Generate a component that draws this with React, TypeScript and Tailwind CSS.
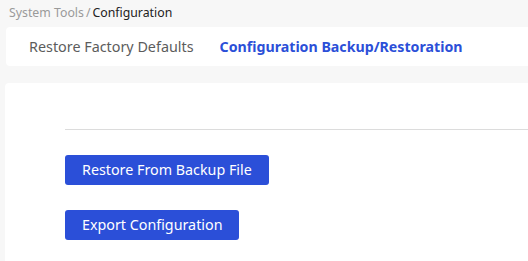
export default function App() {
  return (
    <div className="w-[528px] h-[261px] overflow-hidden bg-[#f7f7f7] font-['Noto_Sans',sans-serif]">
      {/* Breadcrumb */}
      <div className="h-[27px] pl-[9px] flex items-center text-[12.3px]">
        <span className="text-[#9a9a9a]">System Tools</span>
        <span className="text-[#9a9a9a] mx-[2px]">/</span>
        <span className="text-[#222]">Configuration</span>
      </div>

      {/* Tabs */}
      <div className="ml-[6px] w-[600px] h-[39px] bg-white rounded-[4px] flex items-center text-[14.35px]">
        <span className="ml-[23px] text-[#5c5c5c]">Restore Factory Defaults</span>
        <span className="ml-[26px] text-[#2b4fd8] font-bold text-[14.2px]">Configuration Backup/Restoration</span>
      </div>

      {/* Content */}
      <div className="mt-[17px] ml-[5px] w-[600px] h-[200px] bg-white rounded-[4px] pl-[60px] pt-[46px]">
        <div className="h-px bg-[#dcdcdc]" />
        <div className="pt-[25px] flex flex-col items-start gap-[25px]">
          <button className="h-[30px] px-[17px] rounded-[3px] bg-[#2b4fd8] text-white text-[14.3px]">
            Restore From Backup File
          </button>
          <button className="h-[30px] px-[17px] rounded-[3px] bg-[#2b4fd8] text-white text-[14.3px]">
            Export Configuration
          </button>
        </div>
      </div>
    </div>
  )
}
